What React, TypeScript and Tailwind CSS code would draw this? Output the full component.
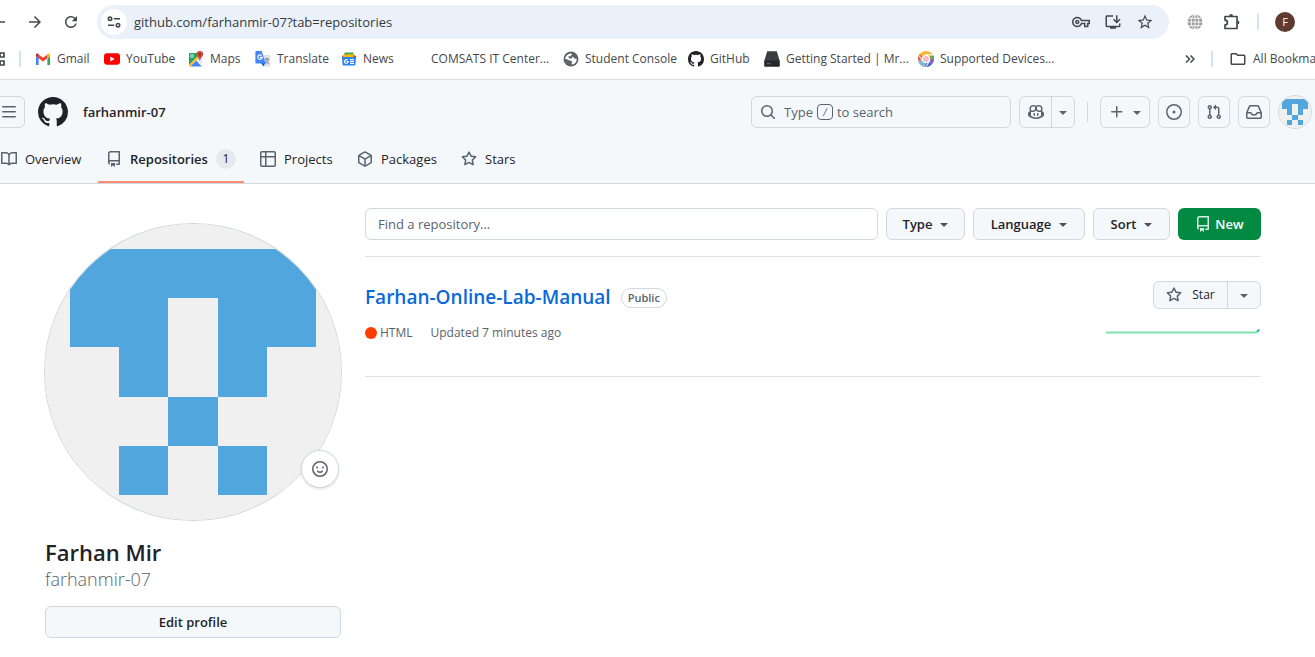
import type { ReactNode } from "react";
import {
  MdArrowBack,
  MdArrowForward,
  MdInstallDesktop,
  MdOutlineFolder,
  MdOutlineVpnKey,
  MdRefresh,
  MdStarOutline,
} from "react-icons/md";

const octicons = {
  bars: "M1 2.75A.75.75 0 0 1 1.75 2h12.5a.75.75 0 0 1 0 1.5H1.75A.75.75 0 0 1 1 2.75Zm0 5A.75.75 0 0 1 1.75 7h12.5a.75.75 0 0 1 0 1.5H1.75A.75.75 0 0 1 1 7.75ZM1.75 12h12.5a.75.75 0 0 1 0 1.5H1.75a.75.75 0 0 1 0-1.5Z",
  github:
    "M8 0c4.42 0 8 3.58 8 8a8.013 8.013 0 0 1-5.45 7.59c-.4.08-.55-.17-.55-.38 0-.27.01-1.13.01-2.2 0-.75-.25-1.23-.54-1.48 1.78-.2 3.65-.88 3.65-3.95 0-.88-.31-1.59-.82-2.15.08-.2.36-1.02-.08-2.12 0 0-.67-.22-2.2.82-.64-.18-1.32-.27-2-.27-.68 0-1.36.09-2 .27-1.53-1.03-2.2-.82-2.2-.82-.44 1.1-.16 1.92-.08 2.12-.51.56-.82 1.28-.82 2.15 0 3.06 1.86 3.75 3.64 3.95-.23.2-.44.55-.51 1.07-.46.21-1.61.55-2.33-.66-.15-.24-.6-.83-1.23-.82-.67.01-.27.38.01.53.34.19.73.9.82 1.13.16.45.68 1.31 2.69.94 0 .67.01 1.3.01 1.49 0 .21-.15.45-.55.38A7.995 7.995 0 0 1 0 8c0-4.42 3.58-8 8-8Z",
  book: "M0 1.75A.75.75 0 0 1 .75 1h4.253c1.227 0 2.317.59 3 1.501A3.743 3.743 0 0 1 11.006 1h4.245a.75.75 0 0 1 .75.75v10.5a.75.75 0 0 1-.75.75h-4.507a2.25 2.25 0 0 0-1.591.659l-.622.621a.75.75 0 0 1-1.06 0l-.622-.621A2.25 2.25 0 0 0 5.258 13H.75a.75.75 0 0 1-.75-.75Zm7.251 10.324.004-5.073-.002-2.253A2.25 2.25 0 0 0 5.003 2.5H1.5v9h3.757a3.75 3.75 0 0 1 1.994.574ZM8.755 4.75l-.004 7.322a3.752 3.752 0 0 1 1.992-.572H14.5v-9h-3.495a2.25 2.25 0 0 0-2.25 2.25Z",
  repo: "M2 2.5A2.5 2.5 0 0 1 4.5 0h8.75a.75.75 0 0 1 .75.75v12.5a.75.75 0 0 1-.75.75h-2.5a.75.75 0 0 1 0-1.5h1.75v-2h-8a1 1 0 0 0-.714 1.7.75.75 0 1 1-1.072 1.05A2.495 2.495 0 0 1 2 11.5Zm10.5-1h-8a1 1 0 0 0-1 1v6.708A2.486 2.486 0 0 1 4.5 9h8ZM5 12.25a.25.25 0 0 1 .25-.25h3.5a.25.25 0 0 1 .25.25v3.25a.25.25 0 0 1-.4.2l-1.45-1.087a.249.249 0 0 0-.3 0L5.4 15.7a.25.25 0 0 1-.4-.2Z",
  table:
    "M0 1.75C0 .784.784 0 1.75 0h12.5C15.216 0 16 .784 16 1.75v12.5A1.75 1.75 0 0 1 14.25 16H1.75A1.75 1.75 0 0 1 0 14.25ZM6.5 6.5v8h7.75a.25.25 0 0 0 .25-.25V6.5Zm8-1.5V1.75a.25.25 0 0 0-.25-.25H6.5V5Zm-13 1.5v7.75c0 .138.112.25.25.25H5v-8ZM5 5V1.5H1.75a.25.25 0 0 0-.25.25V5Z",
  pkg: "m8.878.392 5.25 3.045c.54.314.872.89.872 1.514v6.098a1.75 1.75 0 0 1-.872 1.514l-5.25 3.045a1.75 1.75 0 0 1-1.756 0l-5.25-3.045A1.75 1.75 0 0 1 1 11.049V4.951c0-.624.332-1.201.872-1.514L7.122.392a1.75 1.75 0 0 1 1.756 0ZM7.875 1.69l-4.63 2.685L8 7.133l4.755-2.758-4.63-2.685a.248.248 0 0 0-.25 0ZM2.5 5.677v5.372c0 .09.047.171.125.216l4.625 2.683V8.432Zm6.25 8.271 4.625-2.683a.25.25 0 0 0 .125-.216V5.677L8.75 8.432Z",
  star: "M8 .25a.75.75 0 0 1 .673.418l1.882 3.815 4.21.612a.75.75 0 0 1 .416 1.279l-3.046 2.97.719 4.192a.751.751 0 0 1-1.088.791L8 12.347l-3.766 1.98a.75.75 0 0 1-1.088-.79l.72-4.194L.818 6.374a.75.75 0 0 1 .416-1.28l4.21-.611L7.327.668A.75.75 0 0 1 8 .25Zm0 2.445L6.615 5.5a.75.75 0 0 1-.564.41l-3.097.45 2.24 2.184a.75.75 0 0 1 .216.664l-.528 3.084 2.769-1.456a.75.75 0 0 1 .698 0l2.77 1.456-.53-3.084a.75.75 0 0 1 .216-.664l2.24-2.183-3.096-.45a.75.75 0 0 1-.564-.41L8 2.694Z",
  search:
    "M10.68 11.74a6 6 0 0 1-7.922-8.982 6 6 0 0 1 8.982 7.922l3.04 3.04a.749.749 0 0 1-.326 1.275.749.749 0 0 1-.734-.215ZM11.5 7a4.499 4.499 0 1 0-8.997 0A4.499 4.499 0 0 0 11.5 7Z",
  copilot:
    "M7.998 15.035c-4.562 0-7.873-2.914-7.998-3.749V9.338c.085-.628.677-1.686 1.588-2.065.013-.07.024-.143.036-.218.029-.183.06-.384.126-.612-.201-.508-.254-1.084-.254-1.656 0-.87.128-1.769.693-2.484.579-.733 1.494-1.124 2.724-1.261 1.206-.134 2.262.034 2.944.765.05.053.096.108.139.165.044-.057.094-.112.143-.165.682-.731 1.738-.899 2.944-.765 1.23.137 2.145.528 2.724 1.261.566.715.693 1.614.693 2.484 0 .572-.053 1.148-.254 1.656.066.228.098.429.126.612.012.076.024.148.037.218.924.385 1.522 1.471 1.591 2.095v1.872c0 .766-3.351 3.795-8.002 3.795Zm0-1.485c2.28 0 4.584-1.11 5.002-1.433V7.862l-.023-.116c-.49.21-1.075.291-1.727.291-1.146 0-2.059-.327-2.71-.991A3.222 3.222 0 0 1 8 6.303a3.24 3.24 0 0 1-.544.743c-.65.664-1.563.991-2.71.991-.652 0-1.236-.081-1.727-.291l-.023.116v4.255c.419.323 2.722 1.433 5.002 1.433ZM6.762 2.83c-.193-.206-.637-.413-1.682-.297-1.019.113-1.479.404-1.713.7-.247.312-.369.789-.369 1.554 0 .793.129 1.171.308 1.371.162.181.519.379 1.442.379.853 0 1.339-.235 1.638-.54.315-.322.527-.827.617-1.553.117-.935-.037-1.395-.241-1.614Zm4.155-.297c-1.044-.116-1.488.091-1.681.297-.204.219-.359.679-.242 1.614.091.726.303 1.231.618 1.553.299.305.784.54 1.638.54.922 0 1.28-.198 1.442-.379.179-.2.308-.578.308-1.371 0-.765-.123-1.242-.37-1.554-.233-.296-.693-.587-1.713-.7ZM6.25 9.037a.75.75 0 0 1 .75.75v1.501a.75.75 0 0 1-1.5 0V9.787a.75.75 0 0 1 .75-.75Zm4.25.75v1.501a.75.75 0 0 1-1.5 0V9.787a.75.75 0 0 1 1.5 0Z",
  caret:
    "m4.427 7.427 3.396 3.396a.25.25 0 0 0 .354 0l3.396-3.396A.25.25 0 0 0 11.396 7H4.604a.25.25 0 0 0-.177.427Z",
  plus: "M7.75 2a.75.75 0 0 1 .75.75V7h4.25a.75.75 0 0 1 0 1.5H8.5v4.25a.75.75 0 0 1-1.5 0V8.5H2.75a.75.75 0 0 1 0-1.5H7V2.75A.75.75 0 0 1 7.75 2Z",
  issue:
    "M8 9.5a1.5 1.5 0 1 0 0-3 1.5 1.5 0 0 0 0 3ZM8 0a8 8 0 1 1 0 16A8 8 0 0 1 8 0ZM1.5 8a6.5 6.5 0 1 0 13 0 6.5 6.5 0 0 0-13 0Z",
  pull: "M1.5 3.25a2.25 2.25 0 1 1 3 2.122v5.256a2.251 2.251 0 1 1-1.5 0V5.372A2.25 2.25 0 0 1 1.5 3.25Zm5.677-.177L9.573.677A.25.25 0 0 1 10 .854V2.5h1A2.5 2.5 0 0 1 13.5 5v5.628a2.251 2.251 0 1 1-1.5 0V5a1 1 0 0 0-1-1h-1v1.646a.25.25 0 0 1-.427.177L7.177 3.427a.25.25 0 0 1 0-.354ZM3.75 2.5a.75.75 0 1 0 0 1.5.75.75 0 0 0 0-1.5Zm0 9.5a.75.75 0 1 0 0 1.5.75.75 0 0 0 0-1.5Zm8.25.75a.75.75 0 1 0 1.5 0 .75.75 0 0 0-1.5 0Z",
  inbox:
    "M2.8 2.06A1.75 1.75 0 0 1 4.41 1h7.18c.7 0 1.333.417 1.61 1.06l2.74 6.395c.04.093.06.194.06.295v4.5A1.75 1.75 0 0 1 14.25 15H1.75A1.75 1.75 0 0 1 0 13.25v-4.5c0-.101.02-.202.06-.295Zm1.61.44a.25.25 0 0 0-.23.152L1.887 8H4.75a.75.75 0 0 1 .6.3L6.625 10h2.75l1.275-1.7a.75.75 0 0 1 .6-.3h2.863L11.82 2.652a.25.25 0 0 0-.23-.152Zm10.09 7h-2.875l-1.275 1.7a.75.75 0 0 1-.6.3h-3.5a.75.75 0 0 1-.6-.3L4.375 9.5H1.5v3.75c0 .138.112.25.25.25h12.5a.25.25 0 0 0 .25-.25Z",
};

function Octicon({ name, className = "size-4" }: { name: keyof typeof octicons; className?: string }) {
  return (
    <svg viewBox="0 0 16 16" fill="currentColor" aria-hidden="true" className={`shrink-0 ${className}`}>
      <path d={octicons[name]} />
    </svg>
  );
}

function Smiley() {
  return (
    <svg viewBox="0 0 16 16" fill="none" stroke="currentColor" strokeWidth="1.5" aria-hidden="true" className="size-4">
      <circle cx="8" cy="8" r="7.25" />
      <path d="M5.75 10.2c.5.7 1.3 1.05 2.25 1.05s1.75-.35 2.25-1.05" strokeLinecap="round" />
      <circle cx="5" cy="6.6" r="1" fill="currentColor" stroke="none" />
      <circle cx="11" cy="6.6" r="1" fill="currentColor" stroke="none" />
    </svg>
  );
}

function Identicon() {
  return (
    <svg viewBox="0 0 420 420" aria-hidden="true" className="size-full" shapeRendering="crispEdges">
      <path fill="#f0f0f0" d="M0 0h420v420H0z" />
      <path
        fill="#51a7dd"
        d="M35 35h350v140h-70v70h-70V105h-70v140h-70v-70H35zM175 245h70v70h-70zM105 315h70v70h-70zM245 315h70v70h-70z"
      />
    </svg>
  );
}

const icon16 = "size-4 shrink-0";

const GmailIcon = () => (
  <svg viewBox="0 0 16 16" className={icon16} aria-hidden="true">
    <path fill="#4285f4" d="M1 14h2.6V7.2L1 5.2z" />
    <path fill="#34a853" d="M12.400 14H15V5.200l-2.600 2z" />
    <path fill="#ea4335" d="M3.600 7.300V3.400L8 6.700l4.400-3.300v3.900L8 10.600z" />
    <path fill="#c5221f" d="M1 5.300V4c0-1.500 1.600-1.900 2.600-1v4.300z" />
    <path fill="#fbbc04" d="M15 5.300V4c0-1.500-1.600-1.900-2.600-1v4.300z" />
  </svg>
);

const YouTubeIcon = () => (
  <svg viewBox="0 0 16 16" className={icon16} aria-hidden="true">
    <rect y="2.200" width="16" height="11.600" rx="3" fill="#f00" />
    <path fill="#fff" d="M6.300 5.500v5l4.400-2.500z" />
  </svg>
);

const MapsIcon = () => (
  <svg viewBox="0 0 16 16" className={icon16} aria-hidden="true">
    <path fill="#1fa463" d="M1 3a1 1 0 0 1 1-1h11L1 14.500z" />
    <path fill="#e8eaed" d="M12 4l2 2v8.500L8.200 8.600z" />
    <path fill="#4285f4" d="M2.300 15.500 8.200 9.400l5.600 6.100z" />
    <path fill="#fbc02d" d="M1 13.800 12 2.500l1.500 1.600L2.300 15.500H2a1 1 0 0 1-1-1z" />
    <circle cx="4" cy="5" r="1.500" fill="none" stroke="#fff" strokeWidth=".8" />
    <path fill="#db4437" d="M11.800 0a3.300 3.300 0 0 1 3.300 3.300c0 2.300-2.700 3.300-3.300 7-.6-3.700-3.300-4.700-3.300-7A3.300 3.300 0 0 1 11.800 0z" />
    <circle cx="11.800" cy="3.300" r="1.100" fill="#7b231e" />
  </svg>
);

const TranslateIcon = () => (
  <svg viewBox="0 0 16 16" className={icon16} aria-hidden="true">
    <path fill="#dfe2e6" d="M7 4h7.500a1 1 0 0 1 1 1v9.500a1 1 0 0 1-1 1H9z" />
    <path fill="none" stroke="#607d9b" strokeWidth="1" d="M9.500 8H14M11.800 7v1M13.200 8c-.4 2.200-1.700 3.600-3.200 4.400M10.500 9.300c.7 1.600 1.700 2.500 3.200 3.200" />
    <path fill="#1a57c2" d="M6 12h4.200l-1.800 3.500z" />
    <path fill="#4285f4" d="M1 0h5.700L10.500 12.500H1.400a1 1 0 0 1-1-1V1a1 1 0 0 1 .6-1z" />
    <path fill="none" stroke="#fff" strokeWidth="1.200" d="M6.600 4.600A2.200 2.200 0 1 0 7.200 6.300H5" />
  </svg>
);

const NewsIcon = () => (
  <svg viewBox="0 0 16 16" className={icon16} aria-hidden="true">
    <path fill="#34a853" d="M3.500 1.500h9V6h-9z" />
    <path fill="#ea4335" d="m1 5 3-1.500V8H1.500z" />
    <path fill="#fbbc04" d="m2 3.800 11-.8.500 3H2.500z" />
    <path fill="#ea4335" d="m12.500 4 2.800 1.200-.8 3h-3z" />
    <path fill="#2a85f0" d="M1 6h14l-.5 7.500a1 1 0 0 1-1 1h-11a1 1 0 0 1-1-1z" />
    <path fill="none" stroke="#fff" strokeWidth="1.200" d="M6.600 9.100a1.800 1.800 0 1 0 .6 1.400H5.500M9 8.700h4M9 10.500h4M9 12.300h4" />
  </svg>
);

const GlobeIcon = () => (
  <svg viewBox="0 0 16 16" className={icon16} aria-hidden="true">
    <circle cx="8" cy="8" r="7.500" fill="#5f6368" />
    <path
      fill="#fff"
      d="M2 7.500c.8-2.700 2.800-4.600 5.500-5 .8 0 1.500.3 1.500.8 0 .8-1.300 1-1.300 1.700 0 1 2.800.6 3.500 2 .8 1.500 2.200.4 2.500 1.200.1 2.500-1.500 4.300-3.600 5.200-.7.200-1.500 0-1.500-.8 0-1 .9-1.300.5-2.100-.5-.9-2.500-.6-3.600-1.600C4.500 8 2.500 8.500 2 7.500z"
    />
    <path fill="#5f6368" d="M5 5.500 8.500 5l1 2-3 .8z" />
  </svg>
);

const DeviceIcon = () => (
  <svg viewBox="0 0 16 16" className={icon16} aria-hidden="true">
    <path fill="#3b3d42" d="M3.200.3h9.600L15.700 10H.3z" />
    <path fill="#26282c" d="M.2 9.500h15.600v5.200a1 1 0 0 1-1 1H1.200a1 1 0 0 1-1-1z" />
    <path fill="#5c86c4" d="M3 12.300h3.500v.9H3z" />
  </svg>
);

const ChromeDevicesIcon = () => (
  <svg viewBox="0 0 16 16" className={icon16} aria-hidden="true">
    <circle cx="8" cy="8" r="8" fill="#f6b93b" />
    <path fill="#e8604c" d="M8 8 1.500 3.300A8 8 0 0 0 .2 9.800z" />
    <path fill="#8a63c9" d="m8 8 6.500 4.600A8 8 0 0 0 14.800 4z" />
    <path fill="#4f6fd8" d="m8 8-1 8a8 8 0 0 0 7.500-3.400z" />
    <path fill="#7fb6dc" d="M8 8 .2 9.800A8 8 0 0 0 7 16z" />
    <path fill="#6aa84f" d="m8 8 6.800-4a8 8 0 0 1 1.200 4z" />
    <circle cx="8" cy="8" r="4.300" fill="#fff" />
    <circle cx="8" cy="8" r="3" fill="#f3b8c4" />
    <path stroke="#fff" strokeWidth="1" d="M8 3.900h7M4.300 9.600 1.200 4.700M11.600 9.900 8 15.700" />
  </svg>
);

const PuzzleIcon = () => (
  <svg viewBox="0 0 18 18" fill="none" stroke="currentColor" strokeWidth="1.700" className="size-[18px]" aria-hidden="true">
    <path d="M2 3.500h12v12H2v-3.600a2.400 2.400 0 0 0 0-4.800z" strokeLinejoin="round" />
    <path d="M6.200 3a1.900 1.900 0 0 1 3.800 0zM14.500 7.600a1.900 1.900 0 0 1 0 3.800z" fill="currentColor" stroke="none" />
  </svg>
);

type Bookmark = { label: string; icon: ReactNode; width: string };

const bookmarks: Bookmark[] = [
  { label: "Gmail", icon: <GmailIcon />, width: "w-[69px]" },
  { label: "YouTube", icon: <YouTubeIcon />, width: "w-[84px]" },
  { label: "Maps", icon: <MapsIcon />, width: "w-[67px]" },
  { label: "Translate", icon: <TranslateIcon />, width: "w-[86px]" },
  { label: "News", icon: <NewsIcon />, width: "w-[68px]" },
  { label: "COMSATS IT Center...", icon: <span className="size-4 shrink-0" />, width: "w-[154px]" },
  { label: "Student Console", icon: <GlobeIcon />, width: "w-[125px]" },
  { label: "GitHub", icon: <Octicon name="github" className="size-4 text-[#1f2328]" />, width: "w-[76px]" },
  { label: "Getting Started | Mr...", icon: <DeviceIcon />, width: "w-[154px]" },
  { label: "Supported Devices...", icon: <ChromeDevicesIcon />, width: "w-[140px]" },
];

function BrowserBar() {
  return (
    <div className="border-b border-[#dcdfe2] bg-white text-[#45484b]">
      <div className="flex h-11 items-center">
        <div className="-ml-[10px] flex shrink-0 items-center gap-[18px] pr-[17px]">
          <button aria-label="Back">
            <MdArrowBack className="size-[18px]" />
          </button>
          <button aria-label="Forward">
            <MdArrowForward className="size-[18px]" />
          </button>
          <button aria-label="Reload">
            <MdRefresh className="size-[18px]" />
          </button>
        </div>
        <div className="flex h-[34px] min-w-0 flex-1 items-center gap-[14px] rounded-full bg-[#ebf1fa] pr-[15px] pl-1">
          <button aria-label="Site information" className="grid size-[26px] shrink-0 place-items-center rounded-full bg-white">
            <svg viewBox="0 0 14 12" fill="none" stroke="currentColor" strokeWidth="1.600" className="h-3 w-[14px]" aria-hidden="true">
              <circle cx="3" cy="2.800" r="1.700" />
              <path d="M6.800 2.800H13M1 9.200h6.200" />
              <circle cx="11" cy="9.200" r="1.700" />
            </svg>
          </button>
          <input
            aria-label="Address"
            defaultValue="github.com/farhanmir-07?tab=repositories"
            className="-ml-[7px] min-w-0 flex-1 bg-transparent text-[13px] text-[#36393c] outline-none"
          />
          <button aria-label="Passwords">
            <MdOutlineVpnKey className="size-[18px]" />
          </button>
          <button aria-label="Install">
            <MdInstallDesktop className="size-[18px]" />
          </button>
          <button aria-label="Bookmark this tab">
            <MdStarOutline className="size-[18px]" />
          </button>
        </div>
        <div className="flex shrink-0 items-center pr-5 pl-[18px]">
          <svg viewBox="0 0 16 16" className="size-4" aria-hidden="true">
            <circle cx="8" cy="8" r="7.500" fill="#9b9b9b" />
            <g fill="none" stroke="#fff" strokeWidth=".9">
              <ellipse cx="8" cy="8" rx="3.800" ry="7.500" />
              <path d="M8 0v16M0 8h16M1.500 4.300h13M1.500 11.700h13" />
            </g>
          </svg>
          <button aria-label="Extensions" className="ml-5">
            <PuzzleIcon />
          </button>
          <span className="ml-4 h-4 w-[2px] bg-[#cfe3fb]" />
          <button aria-label="Account" className="ml-4 grid size-5 place-items-center rounded-full bg-[#5f3a31] text-[11px] text-white">
            F
          </button>
        </div>
      </div>
      <div className="flex h-[35px] items-center pb-[6px] text-[12px]">
        <button aria-label="Apps" className="-ml-[9px] mr-[14px] shrink-0">
          <svg viewBox="0 0 14 14" fill="none" stroke="currentColor" strokeWidth="1.700" className="size-[14px]" aria-hidden="true">
            <path d="M1 1h4v4H1zM9 1h4v4H9zM1 9h4v4H1zM9 9h4v4H9z" />
          </svg>
        </button>
        <span className="mr-[14px] h-4 w-[2px] shrink-0 bg-[#cfe3fb]" />
        <nav aria-label="Bookmarks" className="flex shrink-0">
          {bookmarks.map((b) => (
            <a key={b.label} href="#" className={`flex shrink-0 items-center gap-[6px] whitespace-nowrap ${b.width}`}>
              {b.icon}
              {b.label}
            </a>
          ))}
        </nav>
        <div className="ml-auto flex shrink-0 items-center">
          <button aria-label="More bookmarks">
            <svg viewBox="0 0 10 8" fill="none" stroke="currentColor" strokeWidth="1.500" className="h-2 w-[10px]" aria-hidden="true">
              <path d="m1 .5 3.500 3.500L1 7.500M5.500.5 9 4 5.500 7.500" />
            </svg>
          </button>
          <span className="ml-4 h-4 w-[2px] bg-[#cfe3fb]" />
          <a href="#" className="-mr-[18px] ml-4 flex items-center gap-[6px] whitespace-nowrap">
            <MdOutlineFolder className="size-[18px]" />
            All Bookmarks
          </a>
        </div>
      </div>
    </div>
  );
}

const box = "flex h-8 shrink-0 items-center justify-center rounded-md border border-[#d1d9e0] text-[#59636e]";

type Tab = { label: string; icon: keyof typeof octicons; width: string; count?: number };

const tabs: Tab[] = [
  { label: "Overview", icon: "book", width: "w-[97px]" },
  { label: "Repositories", icon: "repo", width: "w-[146px]", count: 1 },
  { label: "Projects", icon: "table", width: "w-[89px]" },
  { label: "Packages", icon: "pkg", width: "w-[96px]" },
  { label: "Stars", icon: "star", width: "w-[70px]" },
];

function SiteHeader() {
  return (
    <header className="border-b border-[#d1d9e0] bg-[#f4f8fb]">
      <div className="flex h-12 items-center pt-4 pr-[3px]">
        <button aria-label="Open menu" className={`${box} -ml-2 w-[33px]`}>
          <Octicon name="bars" />
        </button>
        <a href="#" aria-label="Homepage" className="ml-[13px] text-[#1f2328]">
          <Octicon name="github" className="size-[30px]" />
        </a>
        <a href="#" className="ml-[15px] font-semibold">
          farhanmir-07
        </a>
        <div className="ml-auto flex items-center gap-2">
          <button className={`${box} w-[260px] justify-start gap-2 pl-2`}>
            <Octicon name="search" />
            <span className="flex items-center gap-1">
              Type
              <kbd className="flex size-4 items-center justify-center rounded-sm border border-[#59636e] font-[inherit] text-[10px] leading-none italic">
                /
              </kbd>
              to search
            </span>
          </button>
          <div className={box}>
            <button aria-label="Copilot" className="grid h-full w-8 place-items-center border-r border-[#d1d9e0]">
              <Octicon name="copilot" />
            </button>
            <button aria-label="Copilot options" className="grid h-full w-[22px] place-items-center">
              <Octicon name="caret" />
            </button>
          </div>
          <span className="mr-1 ml-1 h-5 w-px bg-[#d1d9e0]" />
          <button aria-label="Create new" className={`${box} w-[50px] gap-1 pl-1`}>
            <Octicon name="plus" />
            <Octicon name="caret" />
          </button>
          <button aria-label="Issues" className={`${box} w-8`}>
            <Octicon name="issue" />
          </button>
          <button aria-label="Pull requests" className={`${box} w-8`}>
            <Octicon name="pull" />
          </button>
          <button aria-label="Notifications" className={`${box} w-8`}>
            <Octicon name="inbox" />
          </button>
          <button aria-label="User menu" className="size-[34px] overflow-hidden rounded-full border border-[#d1d9e0]">
            <Identicon />
          </button>
        </div>
      </div>
      <nav aria-label="Profile" className="-ml-[7px] flex gap-2 pt-2">
        {tabs.map((tab) => (
          <a
            key={tab.label}
            href="#"
            className={`flex h-[47px] shrink-0 items-center gap-2 border-b-2 px-2 ${tab.width} ${
              tab.count ? "border-[#fd8c73] font-semibold" : "border-transparent"
            }`}
          >
            <Octicon name={tab.icon} className="size-4 text-[#59636e]" />
            {tab.label}
            {tab.count && (
              <span className="grid h-5 min-w-5 place-items-center rounded-full bg-[#e7eaed] text-[12px] font-medium">{tab.count}</span>
            )}
          </a>
        ))}
      </nav>
    </header>
  );
}

function Profile() {
  return (
    <aside className="w-[296px] shrink-0">
      <div className="relative mt-4">
        <div className="aspect-square overflow-hidden rounded-full shadow-[0_0_0_1px_#d1d6db]">
          <Identicon />
        </div>
        <button
          aria-label="Set status"
          className="absolute right-[2px] bottom-8 grid size-[38px] place-items-center rounded-full border border-[#d1d9e0] bg-white text-[#59636e] shadow-sm"
        >
          <Smiley />
        </button>
      </div>
      <h1 className="pt-[17px]">
        <span className="block text-[22px] leading-[30px] font-semibold">Farhan Mir</span>
        <span className="block text-[18px] leading-6 font-light text-[#59636e]">farhanmir-07</span>
      </h1>
      <button className="mt-[15px] h-8 w-full rounded-md border border-[#d1d9e0] bg-[#f4f8fb] font-semibold">Edit profile</button>
    </aside>
  );
}

const filters = [
  { label: "Type", width: "w-[79px]" },
  { label: "Language", width: "w-[112px]" },
  { label: "Sort", width: "w-[77px]" },
];

function Repositories() {
  return (
    <main className="min-w-0 flex-1">
      <div className="flex gap-2 border-b border-[#dde3e8] pb-4">
        <input
          aria-label="Find a repository"
          placeholder="Find a repository..."
          className="h-8 min-w-0 flex-1 rounded-md border border-[#d1d9e0] px-3 placeholder:text-[#59636e]"
        />
        {filters.map((f) => (
          <button
            key={f.label}
            className={`flex h-8 shrink-0 items-center justify-center gap-1 rounded-md border border-[#d1d9e0] bg-[#f4f8fb] pl-1 font-semibold ${f.width}`}
          >
            {f.label}
            <Octicon name="caret" className="size-4 text-[#4a525b]" />
          </button>
        ))}
        <button className="flex h-8 w-[83px] shrink-0 items-center justify-center gap-1 rounded-md bg-[#028a43] font-semibold text-white">
          <Octicon name="repo" className="size-4 text-[#d5ecdf]" />
          New
        </button>
      </div>
      <article className="flex h-[120px] justify-between border-b border-[#dde3e8] pt-6">
        <div>
          <div className="flex h-[34px] items-center gap-[10px]">
            <h2>
              <a href="#" className="text-[19px] font-semibold text-[#0969da]">
                Farhan-Online-Lab-Manual
              </a>
            </h2>
            <span className="flex h-5 items-center rounded-full border border-[#d1d9e0] px-[6px] text-[11px] font-semibold text-[#59636e]">
              Public
            </span>
          </div>
          <div className="mt-2 flex items-center text-[12px] text-[#59636e]">
            <span className="mr-[3px] size-3 rounded-full bg-[#fa3d02]" />
            HTML
            <span className="ml-[18px]">Updated 7 minutes ago</span>
          </div>
        </div>
        <div className="flex flex-col items-end">
          <div className="flex h-7 items-center rounded-md border border-[#d1d9e0] bg-[#f4f8fb] text-[12px] font-medium">
            <button className="flex h-full w-[74px] items-center justify-center gap-[10px] border-r border-[#d1d9e0]">
              <Octicon name="star" className="size-4 text-[#59636e]" />
              Star
            </button>
            <button aria-label="Add to list" className="grid h-full w-8 place-items-center text-[#59636e]">
              <Octicon name="caret" />
            </button>
          </div>
          <svg viewBox="0 0 155 30" fill="none" className="mt-[2px] h-[30px] w-[155px]" aria-label="Past year of activity">
            <path d="M0 21.500h150l3-2.500" stroke="#7fe3b0" strokeWidth="2" />
            <path d="m151 20.500 2.500-2" stroke="#2fc983" strokeWidth="2" />
          </svg>
        </div>
      </article>
    </main>
  );
}

export default function App() {
  return (
    <div className="min-h-screen overflow-x-clip bg-white font-['Open_Sans','Noto_Sans',sans-serif] text-[13px] leading-5 text-[#1f2328]">
      <BrowserBar />
      <SiteHeader />
      <div className="flex gap-6 pt-6 pr-[54px] pb-5 pl-[45px]">
        <Profile />
        <Repositories />
      </div>
    </div>
  );
}
